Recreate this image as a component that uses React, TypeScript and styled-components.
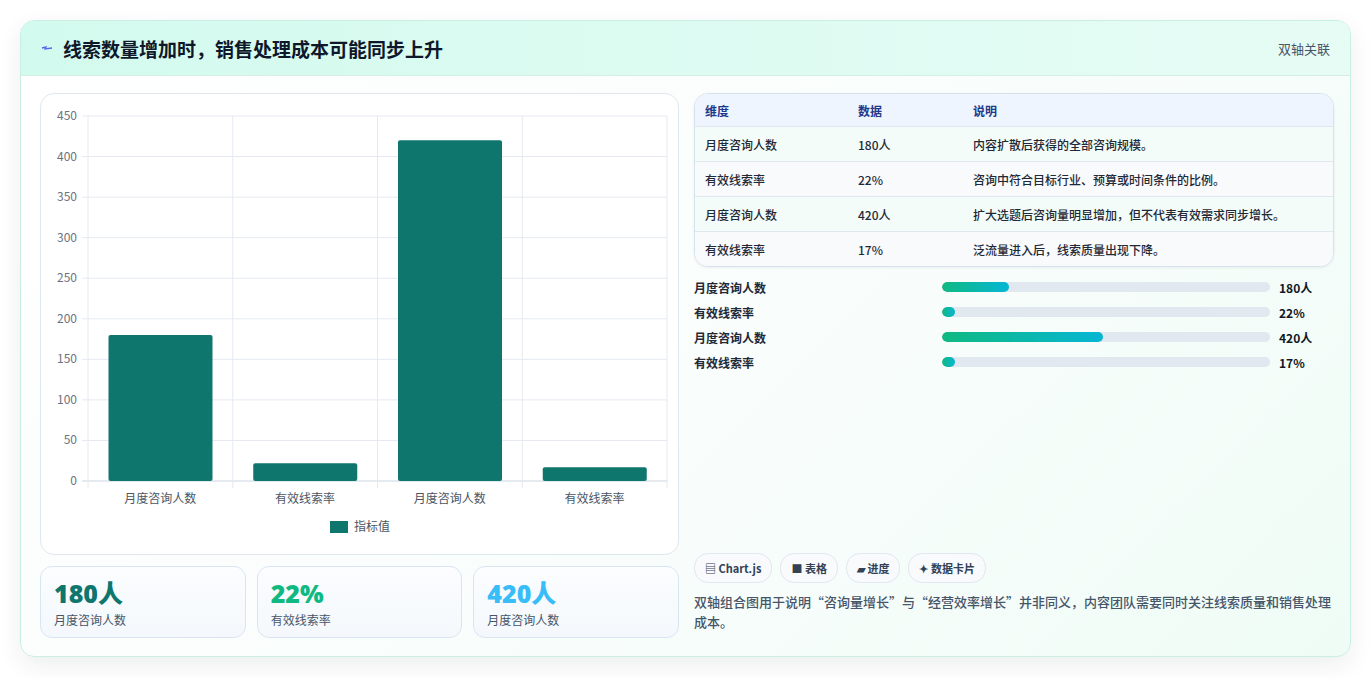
import React from "react";
import styled, { createGlobalStyle } from "styled-components";

const Global = createGlobalStyle`
  html, body { margin: 0; padding: 0; background: #ffffff; }
  body { font-family: "Noto Sans CJK SC", "Noto Sans", sans-serif; }
`;

const Page = styled.div`
  padding: 20px 21px 21px 20px;
`;
const Card = styled.div`
  border: 1px solid #c9efe4;
  border-radius: 14px;
  background: linear-gradient(135deg, #ffffff 0%, #f8fdfb 60%, #effcf6 100%);
  box-shadow: 0 8px 24px rgba(15, 40, 30, 0.08);
  overflow: hidden;
`;
const Header = styled.div`
  height: 54px;
  display: flex;
  align-items: center;
  justify-content: space-between;
  padding: 0 20px;
  background: linear-gradient(90deg, #d3faee 0%, #e6fcf5 100%);
  border-bottom: 1px solid #d4f0e6;
`;
const Title = styled.h1`
  margin: 0;
  font-size: 19px;
  font-weight: 700;
  color: #0f172a;
  display: flex;
  align-items: center;
  gap: 10px;
`;
const Tag = styled.span`
  font-size: 13px;
  color: #475569;
`;
const Body = styled.div`
  display: grid;
  grid-template-columns: 639px 640px;
  gap: 15px;
  padding: 17px 18px 18px 19px;
`;
const Col = styled.div`
  display: flex;
  flex-direction: column;
`;
const ChartCard = styled.div`
  height: 460px;
  border: 1px solid #dfe7ef;
  border-radius: 14px;
  background: #fff;
  overflow: hidden;
`;
const Stats = styled.div`
  display: grid;
  grid-template-columns: repeat(3, 1fr);
  gap: 11px;
  margin-top: 11px;
`;
const Stat = styled.div`
  height: 72px;
  border: 1px solid #d9e6f2;
  border-radius: 12px;
  background: linear-gradient(180deg, #fbfdff, #f4f8fc);
  padding: 10px 13px;
  box-sizing: border-box;
`;
const StatValue = styled.div<{ $c: string }>`
  font-family: "Open Sans", "Noto Sans CJK SC", sans-serif;
  font-size: 25px;
  font-weight: 800;
  line-height: 32px;
  color: ${(p) => p.$c};
`;
const StatLabel = styled.div`
  font-size: 12px;
  color: #475569;
  margin-top: 2px;
`;
const Table = styled.div`
  border: 1px solid #d6e2ee;
  border-radius: 14px;
  overflow: hidden;
  background: #fff;
  box-shadow: 0 1px 3px rgba(0,0,0,0.06);
`;
const Row = styled.div<{ $head?: boolean; $alt?: boolean }>`
  display: grid;
  grid-template-columns: 153px 115px 1fr;
  padding-left: 10px;
  height: ${(p) => (p.$head ? 32 : 34)}px;
  align-items: center;
  font-size: 12px;
  font-weight: ${(p) => (p.$head ? 700 : 500)};
  color: ${(p) => (p.$head ? "#1e3a8a" : "#1f2937")};
  background: ${(p) => (p.$head ? "#eef5ff" : p.$alt ? "#f8fafc" : "#f3fcf8")};
  border-top: ${(p) => (p.$head ? "none" : "1px solid #e2e8f0")};
`;
const Bars = styled.div`
  display: flex;
  flex-direction: column;
  gap: 7px;
  margin-top: 11px;
`;
const BarRow = styled.div`
  display: grid;
  grid-template-columns: 239px 328px 1fr;
  column-gap: 9px;
  align-items: center;
  height: 18px;
  font-size: 12px;
  font-weight: 600;
  color: #1f2937;
`;
const Track = styled.div`
  height: 10px;
  border-radius: 5px;
  background: #e2e8f0;
  overflow: hidden;
`;
const Fill = styled.div`
  height: 100%;
  border-radius: 5px;
  background: linear-gradient(90deg, #10b981, #06b6d4);
`;
const Value = styled.span`
  font-weight: 700;
  color: #111827;
`;
const Chips = styled.div`
  display: flex;
  gap: 8px;
  margin-top: auto;
`;
const Chip = styled.span`
  height: 28px;
  padding: 0 10px;
  border: 1px solid #e2e8f0;
  border-radius: 14px;
  background: #f8fafc;
  display: flex;
  align-items: center;
  font-size: 11px;
  font-weight: 700;
  color: #334155;
`;
const Note = styled.p`
  margin: 9px 0 6px;
  font-size: 13px;
  line-height: 20px;
  color: #475569;
  font-weight: 500;
`;

const labels = ["月度咨询人数", "有效线索率", "月度咨询人数", "有效线索率"];
const values = [180, 22, 420, 17];

function Chart() {
  const x0 = 47, x1 = 626, y0 = 22, y1 = 387;
  const h = y1 - y0;
  const cw = (x1 - x0) / 4;
  return (
    <svg width="638" height="460" viewBox="0 0 638 460" fontFamily="'Noto Sans CJK SC', sans-serif">
      {Array.from({ length: 10 }, (_, i) => {
        const y = y1 - (h * i) / 9;
        return (
          <g key={i}>
            <line x1={x0 - 6} x2={x1} y1={y} y2={y} stroke={i === 0 ? "#cbd5e1" : "#e5e9f0"} />
            <text x={x0 - 11} y={y + 4} fontSize="12" fill="#6b7280" textAnchor="end">{i * 50}</text>
          </g>
        );
      })}
      {[0, 1, 2, 3, 4].map((i) => (
        <line key={i} x1={x0 + cw * i} x2={x0 + cw * i} y1={y0} y2={y1 + 7} stroke="#e5e9f0" />
      ))}
      {values.map((v, i) => {
        const bh = (v / 450) * h;
        const bx = x0 + cw * i + 20.5;
        return (
          <g key={i}>
            <rect x={bx} y={y1 - bh} width={104} height={bh} rx="2" fill="#0f766e" />
            <text x={x0 + cw * i + cw / 2} y={y1 + 22} fontSize="12" fill="#4b5563" textAnchor="middle">{labels[i]}</text>
          </g>
        );
      })}
      <rect x="289" y="427" width="18" height="12" fill="#0f766e" />
      <text x="313" y="437" fontSize="12" fill="#4b5563">指标值</text>
    </svg>
  );
}

export default function App() {
  const rows = [
    ["月度咨询人数", "180人", "内容扩散后获得的全部咨询规模。"],
    ["有效线索率", "22%", "咨询中符合目标行业、预算或时间条件的比例。"],
    ["月度咨询人数", "420人", "扩大选题后咨询量明显增加，但不代表有效需求同步增长。"],
    ["有效线索率", "17%", "泛流量进入后，线索质量出现下降。"],
  ];
  const bars = [
    ["月度咨询人数", 20.5, "180人"],
    ["有效线索率", 4, "22%"],
    ["月度咨询人数", 49, "420人"],
    ["有效线索率", 4, "17%"],
  ] as const;
  return (
    <>
      <Global />
      <Page>
        <Card>
          <Header>
            <Title>
              <svg width="12" height="10" viewBox="0 0 12 10"><path d="M1 5 L5 4 L4 6 L11 5" stroke="#4f6bed" strokeWidth="1.3" fill="none" /></svg>
              线索数量增加时，销售处理成本可能同步上升
            </Title>
            <Tag>双轴关联</Tag>
          </Header>
          <Body>
            <Col>
              <ChartCard><Chart /></ChartCard>
              <Stats>
                <Stat><StatValue $c="#0f766e">180人</StatValue><StatLabel>月度咨询人数</StatLabel></Stat>
                <Stat><StatValue $c="#10b981">22%</StatValue><StatLabel>有效线索率</StatLabel></Stat>
                <Stat><StatValue $c="#38bdf8">420人</StatValue><StatLabel>月度咨询人数</StatLabel></Stat>
              </Stats>
            </Col>
            <Col>
              <Table>
                <Row $head><span>维度</span><span>数据</span><span>说明</span></Row>
                {rows.map((r, i) => (
                  <Row key={i} $alt={i % 2 === 1}><span>{r[0]}</span><span>{r[1]}</span><span>{r[2]}</span></Row>
                ))}
              </Table>
              <Bars>
                {bars.map((b, i) => (
                  <BarRow key={i}>
                    <span>{b[0]}</span>
                    <Track><Fill style={{ width: `${b[1]}%` }} /></Track>
                    <Value>{b[2]}</Value>
                  </BarRow>
                ))}
              </Bars>
              <Chips>
                <Chip>▤ Chart.js</Chip>
                <Chip>■ 表格</Chip>
                <Chip>▰ 进度</Chip>
                <Chip>✦ 数据卡片</Chip>
              </Chips>
              <Note>双轴组合图用于说明“咨询量增长”与“经营效率增长”并非同义，内容团队需要同时关注线索质量和销售处理成本。</Note>
            </Col>
          </Body>
        </Card>
      </Page>
    </>
  );
}
